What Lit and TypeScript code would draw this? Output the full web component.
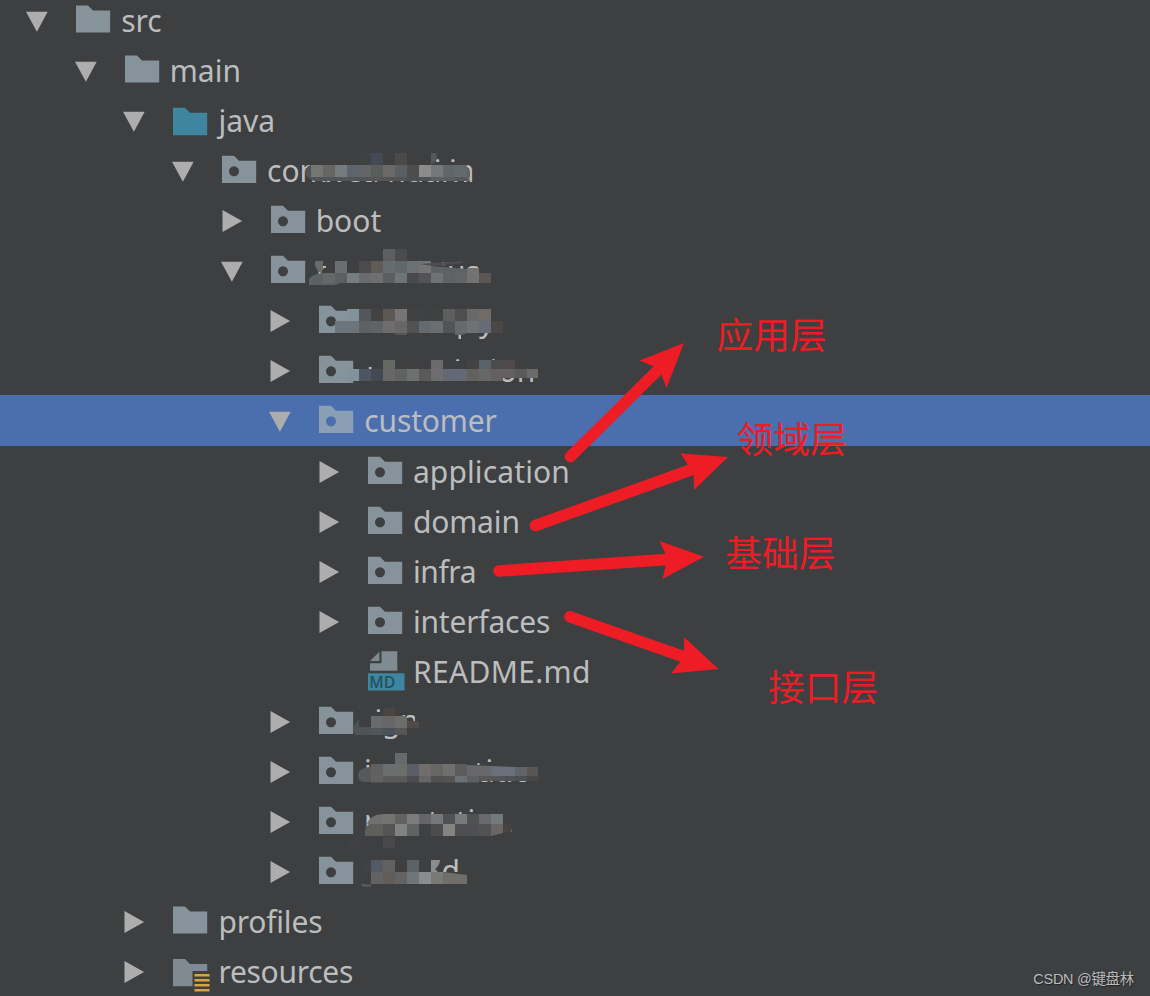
import { LitElement, html, svg, css, nothing } from 'lit';
import { customElement, property } from 'lit/decorators.js';

type IconKind = 'folder' | 'source' | 'package' | 'resources' | 'markdown';

interface TreeRow {
  level: number;
  icon: IconKind;
  label: string;
  open?: boolean;
  leaf?: boolean;
  selected?: boolean;
  spacing?: number;
}

const rows: TreeRow[] = [
  { level: 0, icon: 'folder', label: 'src', open: true },
  { level: 1, icon: 'folder', label: 'main', open: true },
  { level: 2, icon: 'source', label: 'java', open: true },
  { level: 3, icon: 'package', label: 'com', open: true },
  { level: 4, icon: 'package', label: 'boot' },
  { level: 4, icon: 'package', label: '', open: true },
  { level: 5, icon: 'package', label: '' },
  { level: 5, icon: 'package', label: '' },
  { level: 5, icon: 'package', label: 'customer', open: true, selected: true, spacing: -0.15 },
  { level: 6, icon: 'package', label: 'application', spacing: 0.12 },
  { level: 6, icon: 'package', label: 'domain', spacing: -0.15 },
  { level: 6, icon: 'package', label: 'infra', spacing: -0.4 },
  { level: 6, icon: 'package', label: 'interfaces', spacing: -0.2 },
  { level: 6, icon: 'markdown', label: 'README.md', leaf: true, spacing: 0.33 },
  { level: 5, icon: 'package', label: '' },
  { level: 5, icon: 'package', label: '' },
  { level: 5, icon: 'package', label: '' },
  { level: 5, icon: 'package', label: '' },
  { level: 2, icon: 'folder', label: 'profiles', spacing: -0.2 },
  { level: 2, icon: 'resources', label: 'resources', spacing: -0.3 },
];

// slivers of the censored names: [text, x, baseline, window x, y, width, height]
const fragments: [string, number, number, number, number, number, number][] = [
  ['i', 433.8, 182, 430, 156, 12, 6],
  ['i', 449, 182, 445, 156, 12, 6],
  ['a', 457.5, 182, 464, 164, 12, 18],
  ['wea nuanna', 322, 182, 322, 180, 138, 3],
  ['r', 316, 282, 316, 266, 10, 8],
  ['i', 439.5, 285, 440, 262, 8, 5],
  ['us', 447, 283, 447, 266, 34, 3],
  ['p', 456, 332, 456, 332, 5, 7],
  ['y', 479, 332, 479, 331, 16, 10],
  ['t', 366, 382, 367, 367, 8, 3],
  ['i', 453.8, 382, 453, 356, 8, 5],
  ['i', 489.5, 382, 489, 356, 8, 5],
  ['on', 498.5, 382, 498, 377, 40, 6],
  ['i', 374.5, 732, 374, 706, 8, 6],
  ['g', 382, 732, 382, 734, 20, 8],
  ['n', 400, 732, 401, 715, 14, 6],
  ['i', 364, 782, 364, 756, 8, 15],
  ['i', 485.5, 782, 485, 756, 8, 6],
  ['t', 474, 784, 474, 762, 9, 3],
  ['mation', 450, 782, 450, 781, 80, 2],
  ['p', 364, 832, 364, 815, 6, 13],
  ['t', 428, 832, 428, 812, 8, 3],
  ['t', 456, 832, 456, 812, 8, 3],
  ['i', 467.5, 832, 467, 806, 8, 6],
  ['n', 495, 832, 507, 829, 6, 4],
  ['d', 441.5, 882, 441, 857, 18, 15],
];

// mosaic strips: [x, y, height, colours of 12px cells], '-' leaves a gap
const strips: [number, number, number, string][] = [
  [359, 153, 12, '#404143 #434a53 - #4a4a4b'],
  [311, 165, 12, '#757571 #666664 #767b7e #5e646e #636566 #5a5b5b #6b6966 #5c5f61 #4d4d4d #8d8b89 #74787a #606669 #646a6c'],
  [371, 177, 4, '#565656 #545454 #535455 #4c4e50 #505152 #5b5f61 #5a5e60 #555859'],
  [383, 249, 12, '#5c5e61 #4a4b4c'],
  [335, 261, 12, '#6c6d6e - #4b4b4c #5f5b56 #656b6f #62676a #6a7074'],
  [323, 273, 10, '#666767 #5c5e60 #777c7f #6a6b6c #6e7070 #5c5d5e #6f7478 #4a4a4c #525354 #6e7275 #5d6265 #626465 #737371 #5a5654'],
  [347, 309, 12, '#82929a #52575b #424242 #5c5854 #757575 #414141 #3d4143 #404141 #5c5e60 #4e4e4f #696967 #6e6b68'],
  [335, 321, 12, '#6c757c #6d747a #5d6163 #5e6364 #706e6c #676768 #525253 #636a70 #6c6e72 #525557 #68696a #6d7374 #646c76 #4b4744'],
  [383, 360, 9, '#666864 - #404040 - #6b6b6c - - #434343 #5a6268 #4b4b4b #4d4a49'],
  [347, 369, 12, '#82929c #4d5560 #434a54 #666766 #606163 #6e7070 #595959 #6e6e71 #646875 #646a75 #636160 #676767 #646062'],
  [503, 369, 9, '#646062 #5a5a5a'],
  [371, 716, 12, '#696a6c #666666 #6d6d6c'],
  [407, 721, 7, '#514b48 #404040'],
  [371, 728, 7, '#4f5558 #4a5259 #545554'],
  [395, 753, 11, '#66696c'],
  [371, 764, 12, '#606061 #6b6d6e #6c6e6c #5c5e67 #706d6b #686665 #6e706e #5c5c5c'],
  [371, 776, 6.5, '#626262 #595b59 #5a5a5a #4a4c52 #656565 #505151 #545454 #6a7073 #5d6062'],
  [479, 776, 5, '#585858 #545659 #4f5356 #4c4e4f #484645'],
  [383, 814, 10, '#747370 #626262 #7c7c7d #636567 #76777a #4f5152 #78797a #505151 #68696a #727a7b'],
  [383, 824, 12, '#545454 #808284 #616362 #404143 #4b4c4d #858482 #4f4f51 #4e4f50 #505254'],
  [349, 837, 11, '#414043'],
  [383, 837, 11, '#48484a'],
  [371, 860, 12, '#535a64 #626160 - #5b6165'],
  [371, 872, 12, '#626262 #5f5c59 #616364 #6f7579 #8b8c8e #787a78'],
];

// brush ends that do not follow the grid: [path, fill]
const smears: [string, string][] = [
  ['M305 172q2-7 6-7v12h60v4h-57q-8-3-9-9z', '#525557'],
  ['M431 153h5q2 4-1 9l-4 3z', '#555657'],
  ['M467 167q5 3 2 14h-5z', '#606364'],
  ['M315 261h8v7l-2 5q-5-3-6-8z', '#6a6a69'],
  ['M309 285v-6q3-5 14-6v10h18l-6 2z', '#5c6164'],
  ['M419 261h12v12h-12z', '#747474'],
  ['M431 266l36 3v4h-36z', '#5d6265'],
  ['M419 264l44-3v2l-30 3z', '#4d4e4f'],
  ['M467 268h12v5h-12z', '#737371'],
  ['M395 333h12v2h-12z', '#565656'],
  ['M455 333h12l-5 2h-7z', '#646464'],
  ['M355 735q-2-6-1-9l5-8v9h12v8z', '#4f5356'],
  ['M383 709q10-1 12-4v11h-12z', '#4b4541'],
  ['M371 770v12h-7q-6 0-6-7 0-7 13-8z', '#56595a'],
  ['M491 766l24 1v9h-24z', '#6a7079'],
  ['M467 765l24 1v10h-24z', '#666869'],
  ['M515 767h12v9h-12z', '#626469'],
  ['M527 767h11v9h-11z', '#575655'],
  ['M383 814v10h-16q4-10 16-10z', '#707070'],
  ['M383 824v12h-18q-1-9 4-12z', '#5e5e5d'],
  ['M491 824h12v9l-8 2-4 1z', '#6b6666'],
  ['M503 824h8v8l-8 1z', '#464443'],
  ['M365 860h6v12h-8q-1-8 2-12z', '#404144'],
  ['M431 860h9q0 5-5 9l3 3h-7z', '#8c8c8d'],
  ['M443 872l24 3v9h-24z', '#706e6b'],
  ['M361 884h10v3h-6q-4 0-4-3z', '#555657'],
  ['M527 369h11v9h-11z', '#6c6b6b'],
];

// [shaft, head outline]
const arrows: [string, string][] = [
  ['M570.5 456.5L658 370', '684,343 639.5,360.5 654,366.5 661,373.5 666.5,388'],
  ['M535.5 525.5L692 469.5', '728,457 680.5,453.5 688,465 693.5,475 694,490'],
  ['M499 571L667 559.5', '704,556.8 659.5,541 665.5,554 666,564.5 662.5,579'],
  ['M570 616.8L683 656.5', '718.5,669 684,637 684,651.5 680.5,661.5 671,673.5'],
];

const notes: [number, number, string][] = [
  [716.5, 348.5, '应用层'],
  [736.5, 452.7, '领域层'],
  [725.3, 566.7, '基础层'],
  [768, 700.5, '接口层'],
];

@customElement('tree-icon')
export class TreeIcon extends LitElement {
  static styles = css`
    :host {
      display: block;
      width: 37px;
      height: 50px;
    }
    svg {
      display: block;
      overflow: visible;
    }
    .folder {
      fill: #87939a;
    }
    .source {
      fill: #3e86a0;
    }
    .dim {
      fill: #7f8b91;
    }
    .selected {
      fill: #8a9fb4;
    }
    .lines {
      fill: #d9a343;
    }
    .md {
      font: 600 17px 'Open Sans', sans-serif;
      fill: #24505f;
    }
  `;

  @property() kind: IconKind = 'folder';
  @property({ type: Boolean }) selected = false;

  shape() {
    switch (this.kind) {
      case 'source':
        return svg`<path class="source" d="M0 12.7h12l5 5h17.2v22.5H0z" />`;
      case 'package':
        return svg`<path class=${this.selected ? 'selected' : 'folder'} fill-rule="evenodd"
          d="M0 10.8h12l5 5h17.2v22.2H0zM12 21.3a5 5 0 1 0 .01 0z" />`;
      case 'resources':
        return svg`
          <path class="dim" d="M0 13h12l5 5h17.2v7H19.5v15.3H0z" />
          <path class="lines" d="M21.5 28h15v2.6h-15zM21.5 33h15v2.6h-15zM21.5 38h15v2.6h-15zM21.5 43h15v2.6h-15z" />`;
      case 'markdown':
        return svg`
          <path class="dim" d="M13.5 5.3h15.8v19.5H2V17.3h11.5zM2 15L11.4 5.8v9.2z" />
          <path class="source" d="M0 27.2h36.5v17.3H0z" />
          <text class="md" x="1.2" y="41.8" textLength="26" lengthAdjust="spacingAndGlyphs">MD</text>`;
      default:
        return svg`<path class="folder" d="M0 10.4h12l5 5h17.2v22.2H0z" />`;
    }
  }

  render() {
    return html`<svg width="37" height="50">${this.shape()}</svg>`;
  }
}

@customElement('app-root')
export class AppRoot extends LitElement {
  static styles = css`
    :host {
      display: block;
      position: relative;
      width: 1150px;
      height: 996px;
      overflow: hidden;
      background: #3d3f41;
      color: #bbbdbe;
      font-family: 'Noto Sans', 'Open Sans', sans-serif;
    }
    .tree {
      display: grid;
      grid-auto-rows: 50.06px;
      margin-top: -4.9px;
    }
    .row {
      display: flex;
      align-items: flex-start;
    }
    .row.selected {
      background: #4b6eaf;
    }
    .toggle {
      flex: none;
      width: 50px;
      height: 50px;
      margin-left: 26.2px;
      fill: #adadad;
    }
    tree-icon {
      flex: none;
    }
    .label {
      margin-left: 8px;
      font-size: 30px;
      line-height: 51px;
      white-space: pre;
    }
    .overlay {
      position: absolute;
      inset: 0;
    }
    .fragment {
      font-size: 30px;
      fill: #bbbdbe;
    }
    .shaft {
      fill: none;
      stroke: #ee1c25;
      stroke-width: 11.5;
      stroke-linecap: round;
    }
    .head {
      fill: #ee1c25;
    }
    .note {
      font-family: 'Noto Sans CJK SC', sans-serif;
      font-size: 36.7px;
      fill: #ee1c25;
    }
    .watermark {
      position: absolute;
      right: 16px;
      bottom: 6px;
      font: 14.5px/22px 'Liberation Sans', 'Noto Sans CJK SC', sans-serif;
      letter-spacing: -0.3px;
      color: #b9babb;
      text-shadow: 1px 1px 1px #222;
    }
  `;

  renderRow(row: TreeRow) {
    return html`
      <div class="row ${row.selected ? 'selected' : ''}" style="padding-left: ${row.level * 48.62}px">
        <svg class="toggle">
          ${row.leaf
            ? nothing
            : row.open
              ? svg`<path d="M0 16.8h21.7L10.9 36.8z" />`
              : svg`<path d="M1.5 15v22l19.6-11z" />`}
        </svg>
        <tree-icon .kind=${row.icon} .selected=${!!row.selected}></tree-icon>
        <span class="label" style="letter-spacing: ${row.spacing ?? 0}px">${row.label}</span>
      </div>
    `;
  }

  renderMosaic() {
    return svg`
      ${fragments.map(([text, x, baseline, left, top, w, h]) => svg`
        <svg x=${left} y=${top} width=${w} height=${h}>
          <text class="fragment" x=${x - left} y=${baseline - top}>${text}</text>
        </svg>
      `)}
      ${smears.map(([d, fill]) => svg`<path d=${d} fill=${fill} />`)}
      ${strips.map(([x, y, h, cells]) =>
        cells.split(' ').map((fill, i) =>
          fill === '-' ? nothing : svg`<rect x=${x + i * 12} y=${y} width="12" height=${h} fill=${fill} />`
        )
      )}
    `;
  }

  render() {
    return html`
      <div class="tree">${rows.map((row) => this.renderRow(row))}</div>
      <svg class="overlay" width="1150" height="996">
        ${this.renderMosaic()}
        ${arrows.map(([shaft, head]) => svg`<path class="shaft" d=${shaft} /><polygon class="head" points=${head} />`)}
        ${notes.map(([x, y, text]) => svg`<text class="note" x=${x} y=${y}>${text}</text>`)}
      </svg>
      <div class="watermark">CSDN @键盘林</div>
    `;
  }
}
